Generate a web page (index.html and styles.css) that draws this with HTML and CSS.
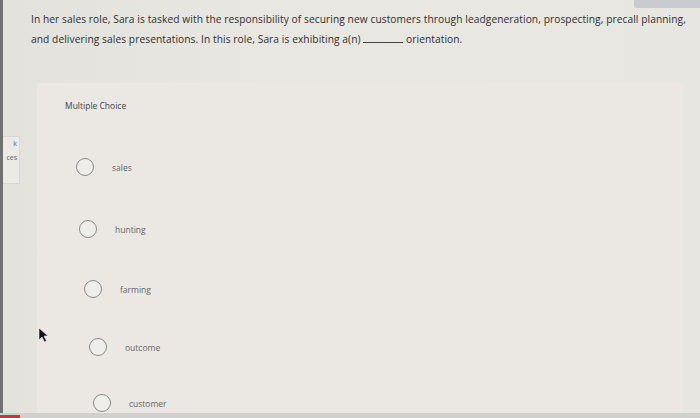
FILE: index.html
```html
<!DOCTYPE html>
<html>
<head>
<meta charset="utf-8">
<link rel="stylesheet" href="styles.css">
</head>
<body>
<div class="screen">
  <aside class="rail">
    <div class="tab">
      <span>k</span>
      <span>ces</span>
    </div>
  </aside>
  <main class="main">
    <div class="topbtn"></div>
    <p class="question">In her sales role, Sara is tasked with the responsibility of securing new customers through leadgeneration, prospecting, precall planning,<br>and delivering sales presentations. In this role, Sara is exhibiting a(n) <span class="blank"></span> orientation.</p>
    <section class="card">
      <div class="kind">Multiple Choice</div>
      <ul class="options">
        <li class="opt"><span class="radio"></span><span class="label">sales</span></li>
        <li class="opt"><span class="radio"></span><span class="label">hunting</span></li>
        <li class="opt"><span class="radio"></span><span class="label">farming</span></li>
        <li class="opt"><span class="radio"></span><span class="label">outcome</span></li>
        <li class="opt"><span class="radio"></span><span class="label">customer</span></li>
      </ul>
    </section>
  </main>
  <svg class="cursor" width="12" height="16" viewBox="0 0 12 16"><path d="M1 1 L1 13 L4 10 L6.5 15 L8.5 14 L6 9 L10 9 Z" fill="#111" stroke="#eee" stroke-width="0.6"/></svg>
</div>
<div class="bezel"><span class="red"></span></div>
</body>
</html>
```
FILE: styles.css
```css
* { box-sizing: border-box; }
html, body { margin: 0; padding: 0; }
body {
  width: 700px;
  height: 418px;
  overflow: hidden;
  background: #e5e3de;
  font-family: "Open Sans", Lato, sans-serif;
}
.screen {
  position: relative;
  display: flex;
  height: 413px;
  overflow: hidden;
  border-left: 3px solid #727170;
  background: linear-gradient(90deg, #e3e2dd 0%, #e9e7e2 40%, #e8e6e1 100%);
}
.rail {
  width: 17px;
  flex: none;
  padding-top: 136px;
}
.tab {
  width: 17px;
  height: 48px;
  background: #ebeae6;
  border: 1px solid #d9d8d4;
  border-left: none;
  display: flex;
  flex-direction: column;
  align-items: flex-end;
  padding: 2px 2px 0 0;
  gap: 5px;
  font-size: 7px;
  color: #5a6478;
}
.main {
  position: relative;
  flex: 1;
  padding: 9px 0 0 11px;
}
.topbtn {
  position: absolute;
  top: 0;
  right: 0;
  width: 66px;
  height: 8px;
  background: #c9cbd1;
  border-radius: 0 0 0 2px;
}
.question {
  margin: 0;
  white-space: nowrap;
  font-size: 10.2px;
  line-height: 20px;
  letter-spacing: 0.08px;
  color: #2e2e2e;
}
.blank {
  display: inline-block;
  width: 40px;
  border-bottom: 1px solid #444;
}
.card {
  margin: 34px 0 0 6px;
  width: 646px;
  height: 340px;
  background: #ebe8e3;
  padding: 17px 0 0 28px;
}
.kind {
  font-size: 8.5px;
  color: #444;
}
.options {
  list-style: none;
  margin: 0;
  padding: 0;
}
.opt {
  display: flex;
  align-items: center;
  gap: 18px;
  height: 58px;
}
.opt:first-child { margin-top: 27px; padding-left: 11px; }
.opt:nth-child(2) { padding-left: 14px; margin-top: 4px; }
.opt:nth-child(3) { padding-left: 19px; margin-top: 2px; }
.opt:nth-child(4) { padding-left: 24px; }
.opt:nth-child(5) { padding-left: 28px; margin-top: -2px; }
.radio {
  width: 18px;
  height: 18px;
  flex: none;
  border-radius: 50%;
  border: 1.3px solid #8a8a8a;
  background: #f0eeea;
}
.label {
  font-size: 8.5px;
  color: #666;
}
.cursor {
  position: absolute;
  left: 35px;
  top: 327px;
}
.bezel {
  height: 5px;
  background: #d2d0cc;
  position: relative;
}
.red {
  position: absolute;
  left: 0;
  bottom: 0;
  width: 20px;
  height: 3px;
  background: #c0393b;
}
```
